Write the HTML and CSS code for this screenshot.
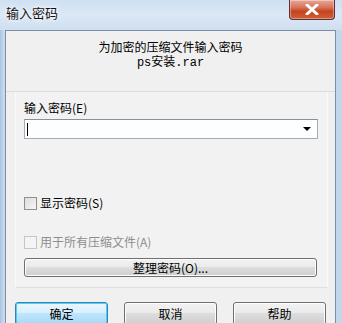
FILE: index.html
```html
<!DOCTYPE html>
<html>
<head>
<meta charset="utf-8">
<link rel="stylesheet" href="styles.css">
</head>
<body>
<div class="window">
  <div class="titlebar">
    <span class="title">输入密码</span>
    <span class="close"><svg width="16" height="11" viewBox="0 0 16 11"><path d="M3 1 L13 10 M13 1 L3 10" stroke="#fff" stroke-width="3" stroke-linecap="round"/></svg></span>
  </div>
  <div class="client">
    <div class="header">
      <div class="h1">为加密的压缩文件输入密码</div>
      <div class="h2">ps安装.rar</div>
    </div>
    <div class="panel">
      <div class="label">输入密码(<u>E</u>)</div>
      <div class="combo"><span class="caret"></span><span class="arrow"></span></div>
      <label class="check first"><span class="box"></span>显示密码(<u>S</u>)</label>
      <label class="check disabled"><span class="box"></span>用于所有压缩文件(<u>A</u>)</label>
      <div class="btn wide">整理密码(<u>O</u>)...</div>
    </div>
    <div class="footer">
      <div class="btn def">确定</div>
      <div class="btn">取消</div>
      <div class="btn">帮助</div>
    </div>
  </div>
</div>
</body>
</html>
```
FILE: styles.css
```css
html, body {
  margin: 0;
  padding: 0;
  width: 342px;
  height: 323px;
  overflow: hidden;
}
body {
  background: linear-gradient(90deg, #a9c4df 0px, #c9dcef 4px, #d6e5f3 60%, #c2d7ec 100%);
  font-family: "Noto Sans CJK SC", "Noto Sans", sans-serif;
  font-size: 12px;
  color: #000;
}
.window {
  height: 323px;
  display: flex;
  flex-direction: column;
}
.titlebar {
  height: 30px;
  flex: none;
  display: flex;
  align-items: flex-start;
  justify-content: space-between;
  background: linear-gradient(180deg, #cfe0f1 0%, #dbe8f5 50%, #cfdff0 100%);
}
.title {
  margin: 5px 0 0 6px;
  font-size: 13px;
  line-height: 16px;
  color: #111;
  text-shadow: 0 0 6px #fff, 0 0 3px #fff;
}
.close {
  width: 44px;
  height: 19px;
  margin-right: 7px;
  border: 1px solid #5a3030;
  border-top: none;
  border-radius: 0 0 4px 4px;
  background: linear-gradient(180deg, #e9a99a 0%, #d7715a 40%, #c4441f 60%, #d0603a 100%);
  box-shadow: inset 0 0 0 1px rgba(255,255,255,0.35);
  display: flex;
  align-items: center;
  justify-content: center;
}
.client {
  flex: 1;
  margin: 0 6px 0 5px;
  background: #f0f0f0;
  border: 1px solid #7a8ea5;
  border-bottom: none;
  display: flex;
  flex-direction: column;
}
.header {
  height: 61px;
  flex: none;
  text-align: center;
  padding-top: 8px;
  box-sizing: border-box;
  border-bottom: 1px solid #dcdcdc;
}
.h1 {
  line-height: 16px;
}
.h2 {
  line-height: 16px;
  font-family: "Liberation Mono", "Noto Sans CJK SC", monospace;
  font-size: 12px;
}
.panel {
  margin: 0 7px 0 9px;
  height: 196px;
  flex: none;
  background: #f2f2f2;
  border-left: 1px solid #fafafa;
  border-right: 1px solid #fafafa;
  border-bottom: 1px solid #dedede;
  padding: 8px 9px 0 8px;
  box-sizing: border-box;
  display: flex;
  flex-direction: column;
}
.label {
  line-height: 16px;
  height: 16px;
}
u { text-decoration: none; }
.combo {
  margin-top: 3px;
  height: 20px;
  box-sizing: border-box;
  border: 1px solid #a5acb5;
  border-top-color: #8a9098;
  background: #fcfeff;
  display: flex;
  align-items: center;
  justify-content: space-between;
  padding: 0 6px 0 2px;
}
.caret {
  width: 1px;
  height: 13px;
  background: #000;
}
.arrow {
  width: 0;
  height: 0;
  border-left: 4px solid transparent;
  border-right: 4px solid transparent;
  border-top: 4px solid #000;
}
.check {
  display: flex;
  align-items: center;
  height: 16px;
  line-height: 16px;
}
.check.first { margin-top: 56px; }
.check.disabled { margin-top: 23px; color: #8d8d8d; }
.box {
  width: 11px;
  height: 11px;
  border: 1px solid #8e8f8f;
  background: linear-gradient(135deg, #dcdcdc, #f6f6f6);
  margin-right: 3px;
  flex: none;
}
.disabled .box {
  border-color: #c6c6c6;
  background: #f4f4f4;
}
.btn {
  height: 21px;
  box-sizing: border-box;
  border: 1px solid #707070;
  border-radius: 3px;
  background: linear-gradient(180deg, #f2f2f2 0%, #ebebeb 45%, #dddddd 50%, #cfcfcf 100%);
  box-shadow: inset 0 0 0 1px #fcfcfc;
  display: flex;
  align-items: center;
  justify-content: center;
  line-height: 16px;
}
.btn.wide {
  margin-top: 8px;
  margin-right: 1px;
  height: 19px;
}
.footer {
  display: flex;
  gap: 16px;
  padding: 14px 8px 0 9px;
}
.footer .btn {
  width: 93px;
  height: 23px;
}
.btn.def {
  border-color: #3c7fb1;
  background: linear-gradient(180deg, #eaf6fd 0%, #d9f0fc 45%, #bee6fd 50%, #a7d9f5 100%);
  box-shadow: inset 0 0 0 1px #48d2fb;
}
```
